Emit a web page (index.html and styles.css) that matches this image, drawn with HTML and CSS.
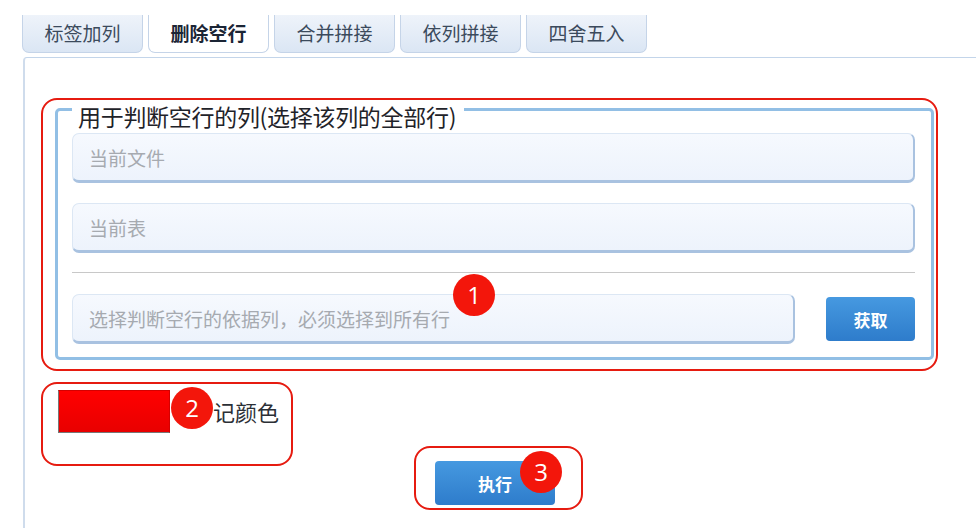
FILE: index.html
```html
<!DOCTYPE html>
<html lang="zh-CN">
<head>
<meta charset="utf-8">
<title>删除空行</title>
<link rel="stylesheet" href="styles.css">
</head>
<body>
<div class="page">
  <div class="tabs">
    <div class="tab">标签加列</div>
    <div class="tab active">删除空行</div>
    <div class="tab">合并拼接</div>
    <div class="tab">依列拼接</div>
    <div class="tab">四舍五入</div>
  </div>
  <div class="panel">
    <div class="mark mark-1">
      <fieldset class="group">
        <legend class="group-title">用于判断空行的列(选择该列的全部行)</legend>
        <div class="inp">当前文件</div>
        <div class="inp inp-gap">当前表</div>
        <div class="sep"></div>
        <div class="row">
          <div class="inp inp-range">选择判断空行的依据列，必须选择到所有行</div>
          <button class="btn btn-get">获取</button>
        </div>
      </fieldset>
    </div>
    <div class="mark mark-2">
      <span class="swatch"></span>
      <span class="badge badge-inline">2</span>
      <span class="color-label">记颜色</span>
    </div>
    <div class="mark mark-3">
      <button class="btn btn-run">执行</button>
    </div>
  </div>
  <span class="badge badge-1">1</span>
  <span class="badge badge-3">3</span>
</div>
</body>
</html>
```
FILE: styles.css
```css
* { box-sizing: border-box; }
html, body { margin: 0; padding: 0; background: #ffffff; }
body {
  font-family: "Noto Sans CJK SC", "Noto Sans", sans-serif;
  color: #2b2f36;
}
.page {
  position: relative;
  width: 976px;
  height: 528px;
  overflow: hidden;
}
.tabs {
  display: flex;
  gap: 5px;
  padding: 15px 0 0 22px;
}
.tab {
  width: 121px;
  height: 38px;
  border: 1px solid #c5d4e8;
  border-top: none;
  border-radius: 0 0 7px 7px;
  background: linear-gradient(#eef3fa, #dbe6f4);
  color: #3b4a5c;
  font-size: 19px;
  line-height: 36px;
  text-align: center;
}
.tab.active {
  background: #ffffff;
  color: #1b2535;
  font-weight: bold;
}
.panel {
  margin: 4px 0 0 23px;
  height: 480px;
  border-top: 1px solid #c3d5ea;
  border-left: 2px solid #cfdcec;
  border-top-left-radius: 4px;
  padding: 40px 0 0 16px;
}
.mark {
  border: 2px solid #e61b10;
  border-radius: 16px;
}
.mark-1 { width: 897px; }
.group {
  margin: 0 2px 9px 12px;
  padding: 15px 16px 13px 14px;
  border: 3px solid #92bfe5;
  border-radius: 5px;
  min-width: 0;
}
.group-title {
  height: 18px;
  line-height: 32px;
  padding: 0 8px 0 6px;
  font-size: 23px;
  letter-spacing: -0.3px;
  color: #1f2329;
  white-space: nowrap;
}
.inp {
  height: 50px;
  display: flex;
  align-items: center;
  padding-left: 16px;
  border: 1px solid #dce7f4;
  border-right: 2px solid #a9c2e0;
  border-bottom: 3px solid #a9c2e0;
  border-radius: 7px;
  background: linear-gradient(#f6f9fe, #edf3fc);
  color: #a6aab0;
  font-size: 19px;
}
.inp-gap { margin-top: 20px; }
.sep {
  margin: 19px 0 21px;
  height: 1px;
  background: #c8c8c8;
}
.row {
  display: flex;
  align-items: center;
}
.inp-range { width: 723px; }
.btn {
  border: none;
  border-radius: 4px;
  background: linear-gradient(#4699e0, #2e7ccb);
  color: #ffffff;
  font-family: "Noto Sans CJK SC", "Noto Sans", sans-serif;
  font-weight: bold;
  font-size: 17px;
  padding: 0;
}
.btn-get {
  margin-left: auto;
  width: 89px;
  height: 44px;
}
.mark-2 {
  margin-top: 11px;
  width: 252px;
  height: 84px;
  display: flex;
  align-items: flex-start;
  padding: 6px 0 0 15px;
}
.swatch {
  width: 112px;
  height: 43px;
  background: linear-gradient(#ff0000, #e80000);
  border: 1px solid #777777;
  border-top-color: #d40000;
  border-right-color: #d40000;
}
.color-label {
  margin-left: 0;
  font-size: 22px;
  line-height: 43px;
  color: #2b2f36;
}
.mark-3 {
  margin: -20px 0 0 373px;
  width: 169px;
  height: 64px;
  padding: 13px 0 0 19px;
}
.btn-run {
  width: 120px;
  height: 44px;
}
.badge {
  position: absolute;
  width: 42px;
  height: 42px;
  border-radius: 50%;
  background: #f3160b;
  color: #ffffff;
  font-family: "Open Sans", "Noto Sans", sans-serif;
  font-size: 24px;
  line-height: 42px;
  text-align: center;
}
.badge-inline {
  position: static;
  flex: none;
  margin: -3px 0 0 1px;
}
.badge-1 { left: 453px; top: 274px; }
.badge-3 { left: 520px; top: 451px; }
```
